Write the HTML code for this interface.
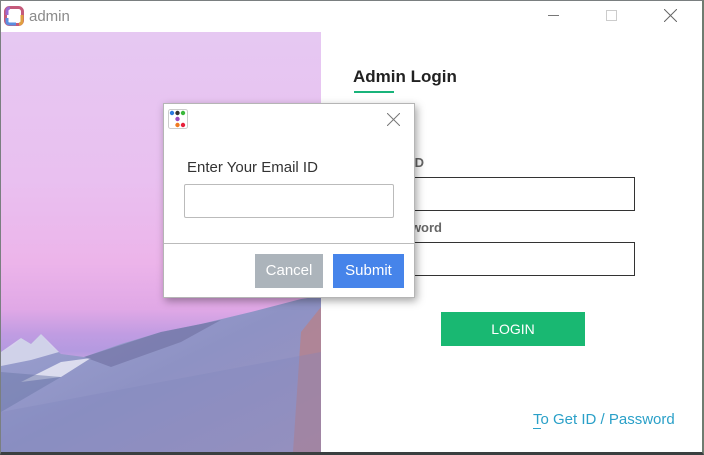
<!DOCTYPE html>
<html><head><meta charset="utf-8"><style>
*{margin:0;padding:0;box-sizing:border-box}
body{width:704px;height:455px;overflow:hidden;background:#fff;font-family:"Liberation Sans",sans-serif;position:relative}
.frame{position:absolute;left:0;top:0;width:704px;height:455px;border:1px solid #7a7f80;border-right:2px solid #6f7c70;border-bottom:3px solid #3a3f40}
.title{position:absolute;left:29px;top:8px;font-size:15px;color:#8a8a8a}
.img{position:absolute;left:1px;top:32px;width:320px;height:420px;overflow:hidden;
background:linear-gradient(180deg,#e6c8f2 0%,#e9c0f0 35%,#ecb4ea 55%,#e0a8e6 66%,#c09ce2 72%,#b49ae0 76%,#e6aee2 82%)}
.dlg{position:absolute;left:163px;top:103px;width:252px;height:195px;background:#fff;border:1px solid #b5b5b5;box-shadow:2px 3px 8px rgba(0,0,0,.35)}
</style></head><body>
<div class="img">
<svg width="320" height="420" viewBox="0 0 320 420" style="position:absolute;left:0;top:0">
<defs><linearGradient id="m" x1="0" y1="0" x2="1" y2="1"><stop offset="0" stop-color="#9ea4d2"/><stop offset=".5" stop-color="#8e92c4"/><stop offset="1" stop-color="#a095c0"/></linearGradient></defs>
<path d="M0 320 L12 314 L20 306 L30 312 L40 302 L50 314 L60 322 L83 325 L120 312 L160 300 L200 292 L250 280 L300 267 L320 264 L320 420 L0 420Z" fill="url(#m)"/>
<path d="M0 320 L20 306 L30 312 L40 302 L58 320 L30 328 L0 334Z" fill="#dfe0f0" opacity=".8"/>
<path d="M20 350 L60 330 L90 326 L60 345Z" fill="#eeeef8" opacity=".8"/>
<path d="M83 325 L160 300 L220 288 L180 310 L110 335Z" fill="#6c6c9c" opacity=".55"/>
<path d="M0 340 L60 345 L0 380Z" fill="#6c78a8" opacity=".5"/>
<path d="M300 300 L320 275 L320 420 L292 420Z" fill="#b88088" opacity=".75"/>
<path d="M0 380 L320 320 L320 420 L0 420Z" fill="#8088bc" opacity=".35"/>
</svg></div>
<svg style="position:absolute;left:4px;top:6px" width="20" height="20" viewBox="0 0 20 20">
<rect x="1.5" y="1.5" width="17" height="17" rx="4" fill="none" stroke="#c55a7a" stroke-width="3"/>
<path d="M3 12 V16 Q3 18 6 18 H12" stroke="#5b8ee0" stroke-width="3" fill="none"/>
<path d="M18 9 V15 Q18 18 15 18" stroke="#e0a040" stroke-width="3" fill="none"/>
<path d="M3 9 V5 Q3 2 6 2" stroke="#9a6ad0" stroke-width="3" fill="none"/>
</svg>
<div class="title">admin</div>
<div style="position:absolute;left:548px;top:15px;width:11px;height:1px;background:#777"></div>
<div style="position:absolute;left:606px;top:10px;width:11px;height:11px;border:1px solid #ccc"></div>
<svg style="position:absolute;left:664px;top:9px" width="13" height="13"><path d="M0 0L13 13M13 0L0 13" stroke="#666" stroke-width="1"/></svg>

<div style="position:absolute;left:353px;top:67px;font-size:17px;font-weight:bold;color:#222">Admin Login</div>
<div style="position:absolute;left:354px;top:91px;width:40px;height:2px;background:#19b37a"></div>
<div style="position:absolute;right:280px;top:155px;font-size:13px;font-weight:bold;color:#666">Login ID</div>
<div style="position:absolute;left:350px;top:177px;width:285px;height:34px;border:1px solid #333"></div>
<div style="position:absolute;right:262px;top:220px;font-size:13px;font-weight:bold;color:#666">Password</div>
<div style="position:absolute;left:350px;top:242px;width:285px;height:34px;border:1px solid #333"></div>
<div style="position:absolute;left:441px;top:312px;width:144px;height:34px;background:#19b872;color:#fff;font-size:14px;text-align:center;line-height:34px">LOGIN</div>
<div style="position:absolute;left:533px;top:411px;font-size:15px;color:#2aa0c8">To Get ID / Password</div>
<div style="position:absolute;left:533px;top:428px;width:8px;height:1px;background:#2aa0c8"></div>

<div class="dlg">
<svg style="position:absolute;left:4px;top:5px" width="20" height="20" viewBox="0 0 20 20">
<rect x=".5" y=".5" width="19" height="19" rx="2" fill="#fff" stroke="#ccc"/>
<circle cx="4" cy="4" r="2.2" fill="#2a7be0"/><circle cx="9.5" cy="4" r="2.2" fill="#333"/><circle cx="15" cy="4" r="2.2" fill="#3bb83b"/>
<circle cx="9.5" cy="10" r="2.2" fill="#9a4ac0"/><circle cx="9.5" cy="16" r="2.2" fill="#f07a20"/><circle cx="15" cy="16" r="2.2" fill="#e8203a"/>
</svg>
<svg style="position:absolute;left:223px;top:9px" width="13" height="13"><path d="M0 0L13 13M13 0L0 13" stroke="#777" stroke-width="1"/></svg>
<div style="position:absolute;left:23px;top:55px;font-size:15px;color:#333">Enter Your Email ID</div>
<div style="position:absolute;left:20px;top:80px;width:210px;height:34px;border:1px solid #bbb;border-radius:2px"></div>
<div style="position:absolute;left:0;top:139px;width:250px;height:1px;background:#bbb"></div>
<div style="position:absolute;left:91px;top:150px;width:68px;height:34px;background:#acb4bb;color:#fff;font-size:15px;text-align:center;line-height:34px">Cancel</div>
<div style="position:absolute;left:169px;top:150px;width:71px;height:34px;background:#4684ea;color:#fff;font-size:15px;text-align:center;line-height:34px">Submit</div>
</div>
<div class="frame"></div>
</body></html>
